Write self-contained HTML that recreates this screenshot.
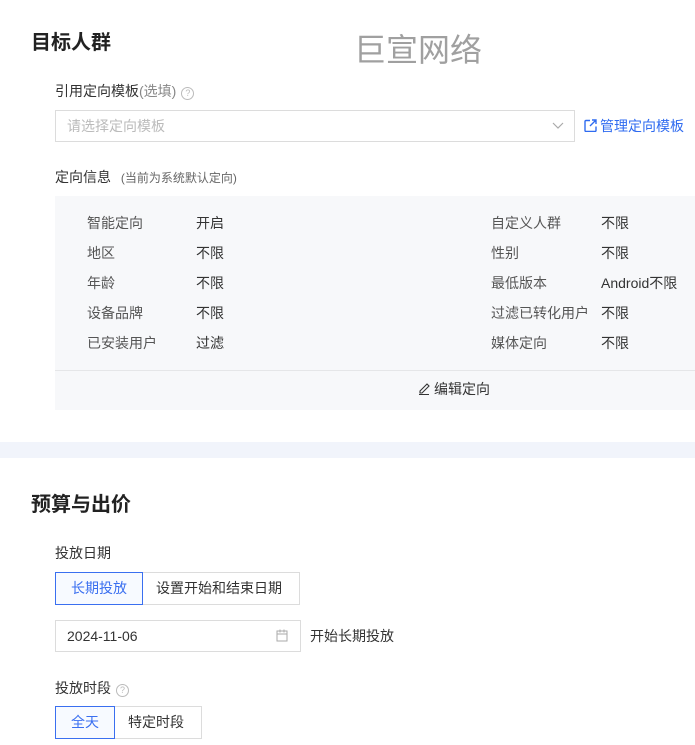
<!DOCTYPE html>
<html><head><meta charset="utf-8"><style>
*{margin:0;padding:0;box-sizing:border-box}
body{width:695px;height:745px;overflow:hidden;background:#fff;font-family:"Liberation Sans","Noto Sans CJK SC",sans-serif;color:#333;font-size:14px;position:relative}
.a{position:absolute;white-space:nowrap;line-height:20px}
.h{font-size:20px;font-weight:bold;color:#222;line-height:24px}
.lbl{font-size:14px;color:#333}
.q{display:inline-block;width:13px;height:13px;border:1px solid #bbb;border-radius:50%;font-size:9px;line-height:11px;text-align:center;color:#bbb;vertical-align:0px;margin-left:5px}
.box{position:absolute;border:1px solid #dcdcdc;background:#fff}
.k{color:#555}
.seg{position:absolute;height:33px;border:1px solid #dcdcdc;display:flex}
.seg div{line-height:31px;padding:0 14px;font-size:14px;color:#333}
.seg .on{border:1px solid #3a6ff0;margin:-1px;color:#3a6ff0;background:#f7faff}
</style></head><body>
<div class="a h" style="left:31px;top:31px">目标人群</div>
<div class="a" style="left:354px;top:30px;font-size:32px;line-height:40px;color:#a0a0a0">巨宣网络</div>
<div class="a lbl" style="left:55px;top:81px">引用定向模板<span style="color:#888">(选填)</span><span class="q">?</span></div>
<div class="box" style="left:55px;top:110px;width:520px;height:32px"></div>
<div class="a" style="left:67px;top:116px;color:#bbb">请选择定向模板</div>
<svg class="a" style="left:552px;top:122px" width="12" height="8"><path d="M1 1l5 5 5-5" fill="none" stroke="#aaa" stroke-width="1.2"/></svg>
<svg class="a" style="left:584px;top:119px" width="13" height="13"><path d="M6 1.5H2a1 1 0 0 0-1 1v9a1 1 0 0 0 1 1h9a1 1 0 0 0 1-1V7.5M8 1h4v4M12 1 6 7" fill="none" stroke="#2f6bf0" stroke-width="1.4"/></svg>
<div class="a" style="left:600px;top:116px;color:#2f6bf0">管理定向模板</div>
<div class="a lbl" style="left:55px;top:167px">定向信息 <span style="font-size:12px;color:#666;margin-left:6px">(当前为系统默认定向)</span></div>
<div class="a" style="left:55px;top:196px;width:640px;height:214px;background:#f7f8fa"></div>
<div class="a" style="left:55px;top:370px;width:640px;height:1px;background:#e5e6e8"></div>
<div class="a k" style="left:87px;top:208px;line-height:30px">智能定向<br>地区<br>年龄<br>设备品牌<br>已安装用户</div>
<div class="a" style="left:196px;top:208px;line-height:30px">开启<br>不限<br>不限<br>不限<br>过滤</div>
<div class="a k" style="left:491px;top:208px;line-height:30px">自定义人群<br>性别<br>最低版本<br>过滤已转化用户<br>媒体定向</div>
<div class="a" style="left:601px;top:208px;line-height:30px">不限<br>不限<br>Android不限<br>不限<br>不限</div>
<svg class="a" style="left:418px;top:382px" width="13" height="13"><path d="M2 9 9 2l2 2-7 7H2zM1 12.5h10" fill="none" stroke="#333" stroke-width="1.1"/></svg>
<div class="a" style="left:434px;top:379px">编辑定向</div>
<div class="a" style="left:0;top:442px;width:695px;height:16px;background:#f1f4fb"></div>
<div class="a h" style="left:31px;top:493px">预算与出价</div>
<div class="a lbl" style="left:55px;top:543px">投放日期</div>
<div class="seg" style="left:55px;top:572px;width:245px"><div class="on" style="padding:0 15px">长期投放</div><div>设置开始和结束日期</div></div>
<div class="box" style="left:55px;top:620px;width:246px;height:32px"></div>
<div class="a" style="left:67px;top:626px">2024-11-06</div>
<svg class="a" style="left:276px;top:629px" width="12" height="13"><rect x="1" y="2" width="10" height="10" fill="none" stroke="#aaa"/><path d="M1 5h10M4 0.5v3M8 0.5v3" stroke="#aaa"/></svg>
<div class="a" style="left:310px;top:626px">开始长期投放</div>
<div class="a lbl" style="left:55px;top:678px">投放时段<span class="q">?</span></div>
<div class="seg" style="left:55px;top:706px;width:147px"><div class="on" style="padding:0 15px">全天</div><div>特定时段</div></div>
</body></html>
